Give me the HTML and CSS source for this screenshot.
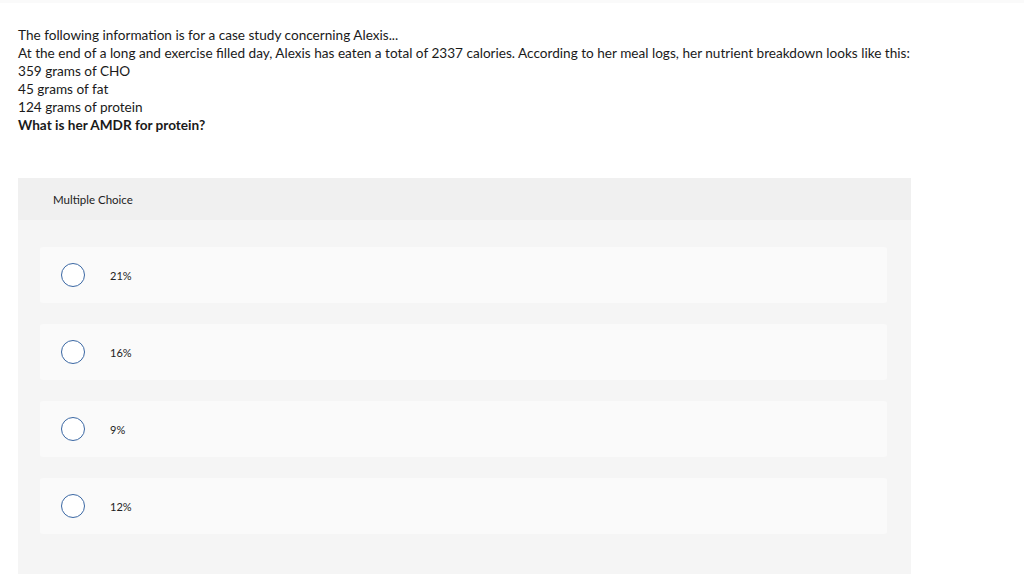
FILE: index.html
```html
<!DOCTYPE html>
<html>
<head>
<meta charset="utf-8">
<link rel="stylesheet" href="styles.css">
</head>
<body>
<div class="topband"></div>
<div class="question">
  <p>The following information is for a case study concerning Alexis...</p>
  <p>At the end of a long and exercise filled day, Alexis has eaten a total of 2337 calories. According to her meal logs, her nutrient breakdown looks like this:</p>
  <p>359 grams of CHO</p>
  <p>45 grams of fat</p>
  <p>124 grams of protein</p>
  <p class="bold">What is her AMDR for protein?</p>
</div>
<div class="panel">
  <div class="panel-head">Multiple Choice</div>
  <div class="panel-body">
    <label class="option"><span class="radio"></span><span class="label">21%</span></label>
    <label class="option"><span class="radio"></span><span class="label">16%</span></label>
    <label class="option"><span class="radio"></span><span class="label">9%</span></label>
    <label class="option"><span class="radio"></span><span class="label">12%</span></label>
  </div>
</div>
</body>
</html>
```
FILE: styles.css
```css
html, body {
  margin: 0;
  padding: 0;
  background: #fff;
}
body {
  font-family: Lato, "Liberation Sans", sans-serif;
  color: #1a1a1a;
}
.topband {
  height: 3px;
  background: #fafafa;
}
.question {
  padding: 23px 18px 0 18px;
  font-size: 13.6px;
  line-height: 18px;
}
.question p {
  margin: 0;
}
.question .bold {
  font-weight: bold;
}
.panel {
  margin: 44px 0 0 18px;
  width: 893px;
  background: #f5f5f5;
}
.panel-head {
  height: 42px;
  display: flex;
  align-items: center;
  padding-left: 35px;
  background: #f0f0f0;
  font-size: 11.5px;
  color: #222;
}
.panel-body {
  padding: 27px 24px 40px 22px;
  display: flex;
  flex-direction: column;
  gap: 21px;
}
.option {
  height: 56px;
  display: flex;
  align-items: center;
  padding-left: 21px;
  background: #fafafa;
  border-radius: 3px;
}
.radio {
  width: 22px;
  height: 22px;
  border: 1px solid #3a67a3;
  border-radius: 50%;
  background: #fff;
  flex: none;
}
.label {
  margin-left: 25px;
  font-size: 11px;
  color: #222;
}
```
